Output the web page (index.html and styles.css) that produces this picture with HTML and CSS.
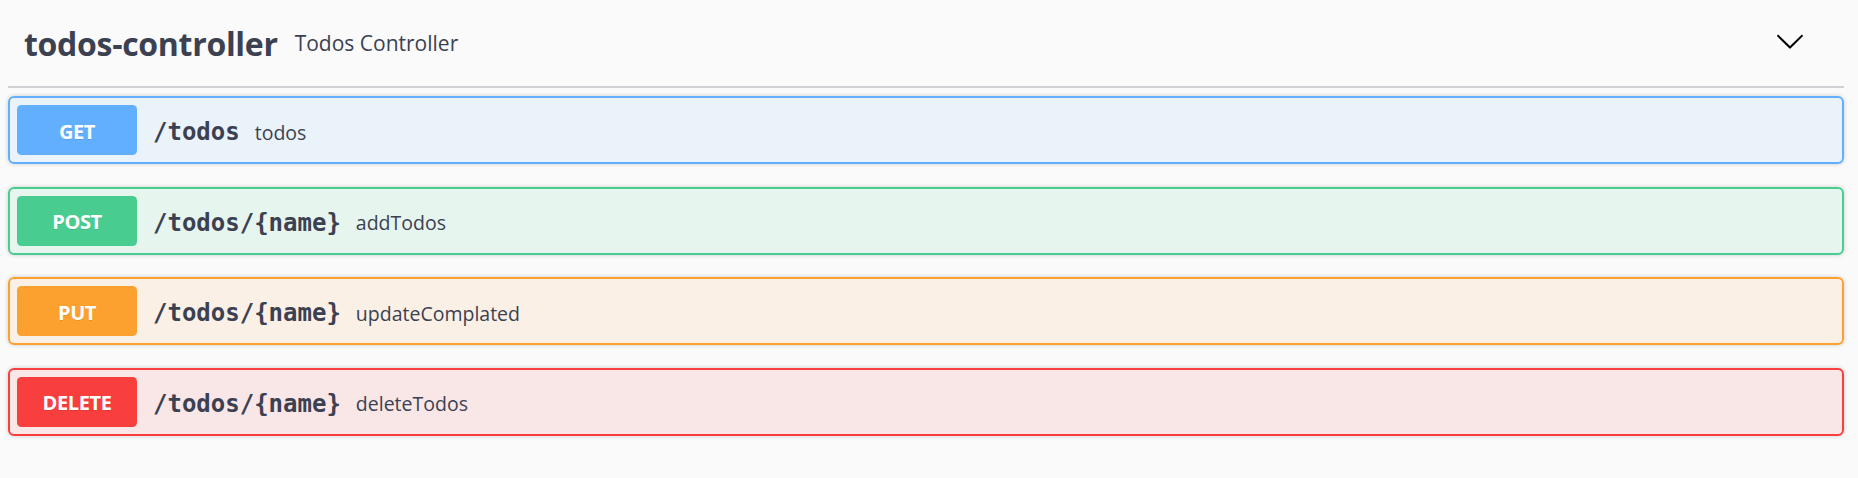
FILE: index.html
```html
<!DOCTYPE html>
<html lang="en">
<head>
<meta charset="utf-8">
<title>todos-controller</title>
<link rel="stylesheet" href="styles.css">
</head>
<body>
<div class="wrap">
  <div class="tag">
    <h3 class="tag-name">todos-controller</h3>
    <span class="tag-desc">Todos Controller</span>
    <button class="expand" aria-label="collapse">
      <svg width="30" height="30" viewBox="0 0 20 20"><path fill="#000" d="M17.418 6.109c.272-.268.709-.268.979 0s.271.701 0 .969l-7.908 7.83c-.27.268-.707.268-.979 0l-7.908-7.83c-.27-.268-.27-.701 0-.969.271-.268.709-.268.979 0L10 13.25l7.418-7.141z"/></svg>
    </button>
  </div>
  <div class="ops">
    <div class="op op-get">
      <span class="method">GET</span>
      <span class="path">/todos</span>
      <span class="summary">todos</span>
    </div>
    <div class="op op-post">
      <span class="method">POST</span>
      <span class="path">/todos/{name}</span>
      <span class="summary">addTodos</span>
    </div>
    <div class="op op-put">
      <span class="method">PUT</span>
      <span class="path">/todos/{name}</span>
      <span class="summary">updateComplated</span>
    </div>
    <div class="op op-delete">
      <span class="method">DELETE</span>
      <span class="path">/todos/{name}</span>
      <span class="summary">deleteTodos</span>
    </div>
  </div>
</div>
</body>
</html>
```

FILE: styles.css
```css
html, body {
  margin: 0;
  padding: 0;
  background: #fafafa;
}
body {
  font-family: "Open Sans", "Noto Sans", sans-serif;
  color: #3b4151;
}
.wrap {
  margin: 0 14px 0 8px;
}
.tag {
  display: flex;
  align-items: center;
  height: 88px;
  box-sizing: border-box;
  padding: 0 39px 0 16px;
  border-bottom: 2px solid rgba(59, 65, 81, 0.22);
}
.tag-name {
  margin: 0;
  font-family: "Open Sans", "Noto Sans", sans-serif;
  font-weight: 700;
  font-size: 32px;
  letter-spacing: -0.3px;
  color: #3b4151;
  line-height: 1;
  position: relative;
  top: 1px;
}
.tag-desc {
  flex: 1;
  padding: 0 17px;
  font-size: 21px;
  color: #3b4151;
}
.expand {
  border: 0;
  background: none;
  padding: 0;
  display: flex;
  position: relative;
  top: -2px;
}
.ops {
  padding-top: 8px;
}
.op {
  display: flex;
  align-items: center;
  padding: 7px;
  border: 2px solid;
  border-radius: 6px;
  margin-bottom: 22.5px;
  box-shadow: 0 0 4px rgba(0, 0, 0, 0.19);
}
.method {
  width: 120px;
  height: 50px;
  border-radius: 4.5px;
  display: flex;
  align-items: center;
  justify-content: center;
  color: #fff;
  font-family: "Open Sans", "Noto Sans", sans-serif;
  font-weight: 700;
  font-size: 20px;
  letter-spacing: -0.4px;
  padding-top: 2px;
  box-sizing: border-box;
  text-shadow: 0 1px 0 rgba(0, 0, 0, 0.1);
}
.path {
  padding: 0 15px 0 16px;
  font-family: "DejaVu Sans Mono", "Liberation Mono", monospace;
  font-weight: 700;
  font-size: 24px;
  color: #3b4151;
  position: relative;
  top: 2px;
}
.summary {
  font-size: 19.5px;
  color: #3b4151;
  position: relative;
  top: 2px;
}
.op-get { border-color: #61affe; background: rgba(97, 175, 254, 0.1); }
.op-get .method { background: #61affe; }
.op-post { border-color: #49cc90; background: rgba(73, 204, 144, 0.1); }
.op-post .method { background: #49cc90; }
.op-put { border-color: #fca130; background: rgba(252, 161, 48, 0.1); }
.op-put .method { background: #fca130; }
.op-delete { border-color: #f93e3e; background: rgba(249, 62, 62, 0.1); }
.op-delete .method { background: #f93e3e; }
```
